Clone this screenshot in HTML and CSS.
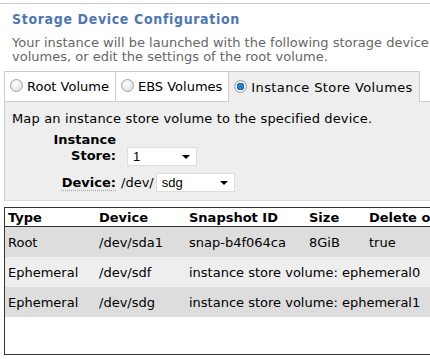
FILE: index.html
```html
<!DOCTYPE html>
<html lang="en">
  <head>
    <meta charset="UTF-8" />
    <title>Storage Device Configuration</title>
    <link rel="stylesheet" href="styles.css">
  </head>
  <body>
    <div class="section">
      <h2>Storage Device Configuration</h2>
      <p class="intro">Your instance will be launched with the following storage device settings. You can add additional EBS volumes, or edit the settings of the root volume.</p>

      <div class="tabs">
        <label class="tab"><input type="radio" name="vol" /> Root Volume</label>
        <label class="tab"><input type="radio" name="vol" /> EBS Volumes</label>
        <label class="tab active"><input type="radio" name="vol" checked /> Instance Store Volumes</label>
      </div>

      <div class="panel">
        <p class="hint">Map an instance store volume to the specified device.</p>
        <div class="field">
          <span class="field-label">Instance<br />Store:</span>
          <span class="select store"><span>1</span></span>
        </div>
        <div class="field">
          <span class="field-label dotted">Device:</span>
          <span class="prefix">/dev/</span>
          <span class="select device"><span>sdg</span></span>
        </div>
      </div>

      <div class="grid">
        <table>
          <colgroup>
            <col class="c-type" />
            <col class="c-dev" />
            <col class="c-snap" />
            <col class="c-size" />
            <col />
          </colgroup>
          <thead>
            <tr>
              <th>Type</th>
              <th>Device</th>
              <th>Snapshot ID</th>
              <th>Size</th>
              <th>Delete on Termination</th>
            </tr>
          </thead>
          <tbody>
            <tr class="dark">
              <td>Root</td>
              <td>/dev/sda1</td>
              <td>snap-b4f064ca</td>
              <td>8GiB</td>
              <td>true</td>
            </tr>
            <tr class="light">
              <td>Ephemeral</td>
              <td>/dev/sdf</td>
              <td colspan="3">instance store volume: ephemeral0</td>
            </tr>
            <tr class="dark">
              <td>Ephemeral</td>
              <td>/dev/sdg</td>
              <td colspan="3">instance store volume: ephemeral1</td>
            </tr>
          </tbody>
        </table>
      </div>
    </div>
  </body>
</html>
```

FILE: styles.css
```css
body {
  margin: 0;
  padding-top: 3px;
  font-family: "DejaVu Sans", Verdana, sans-serif;
  color: #000;
  background-color: white;
  overflow: hidden;
}
.section {
  border-top: 1px solid #ccc;
  width: 740px;
}
h2 {
  margin: 7px 0 0 12px;
  font-family: "DejaVu Sans Condensed", "DejaVu Sans", sans-serif;
  font-stretch: condensed;
  font-size: 14px;
  line-height: 17px;
  letter-spacing: 0.65px;
  color: #4f78b0;
  white-space: nowrap;
}
.intro {
  margin: 8px 0 0 12px;
  font-size: 13px;
  line-height: 14px;
  color: #666;
  width: 695px;
}
/* tabs */
.tabs {
  display: flex;
  margin: 7px 0 0 4px;
}
.tab {
  display: flex;
  align-items: center;
  gap: 4px;
  height: 29px;
  padding: 0 6px 0 5px;
  border: 1px solid #ccc;
  border-bottom: none;
  border-left: none;
  background-color: white;
  font-size: 13px;
  white-space: nowrap;
}
.tab:first-child {
  border-left: 1px solid #ccc;
}
.tab.active {
  background-color: #eee;
  height: 30px;
  margin-bottom: -1px;
  position: relative;
  letter-spacing: 0.38px;
}
.tab input {
  appearance: none;
  margin: 0 0 2px 0;
  width: 13px;
  height: 13px;
  border-radius: 50%;
  border: 1px solid #a0a0a0;
  background: radial-gradient(circle at 40% 35%, #fff, #d8d8d8);
  box-sizing: border-box;
}
.tab input:checked {
  background: radial-gradient(circle, #1d6fb8 0, #2f90d8 2px, #0f4f8f 3.5px, #f2f2f2 4px, #d0d0d0 100%);
}
/* panel */
.panel {
  margin-left: 4px;
  background-color: #eee;
  border-top: 1px solid #ccc;
  border-left: 1px solid #ccc;
  border-bottom: 1px solid #ddd;
  height: 98px;
  padding: 0 0 0 7px;
  font-size: 13px;
}
.hint {
  margin: 0;
  padding-top: 9px;
  line-height: 16px;
  letter-spacing: 0.15px;
}
.field {
  display: flex;
  align-items: flex-end;
  margin-top: 5px;
}
.field + .field {
  margin-top: 9px;
  align-items: center;
}
.field-label {
  width: 104px;
  text-align: right;
  font-weight: bold;
  line-height: 16px;
}
.dotted {
  text-decoration: underline dotted #aaa;
  text-underline-offset: 3px;
}
.select {
  display: inline-flex;
  align-items: center;
  justify-content: space-between;
  position: relative;
  height: 19px;
  background-color: white;
  border: 1px solid #ddd;
  padding-left: 5px;
  box-sizing: border-box;
  font-family: "Liberation Sans", Arial, sans-serif;
  font-size: 13px;
}
.select::after {
  content: "";
  margin-right: 6px;
  border-left: 4px solid transparent;
  border-right: 4px solid transparent;
  border-top: 4px solid #000;
}
.store {
  width: 70px;
  margin-left: 11px;
  margin-bottom: -2px;
}
.prefix {
  margin-left: 5px;
}
.device {
  width: 79px;
  margin-left: 2px;
}
/* table */
.grid {
  margin: 6px 0 0 4px;
  border: 1px solid #333;
  height: 146px;
}
table {
  border-collapse: collapse;
  table-layout: fixed;
  width: 520px;
  font-size: 13px;
  white-space: nowrap;
}
.c-type { width: 91px; }
.c-dev { width: 90px; }
.c-snap { width: 120px; }
.c-size { width: 60px; }
th {
  text-align: left;
  height: 18px;
  padding: 0 0 0 3px;
  border-bottom: 1px solid #333;
  background-color: white;
}
td {
  height: 30px;
  padding: 0 0 0 3px;
  overflow: visible;
}
tr.dark td {
  background-color: #ddd;
}
tr.light td {
  background-color: #eee;
}
```
